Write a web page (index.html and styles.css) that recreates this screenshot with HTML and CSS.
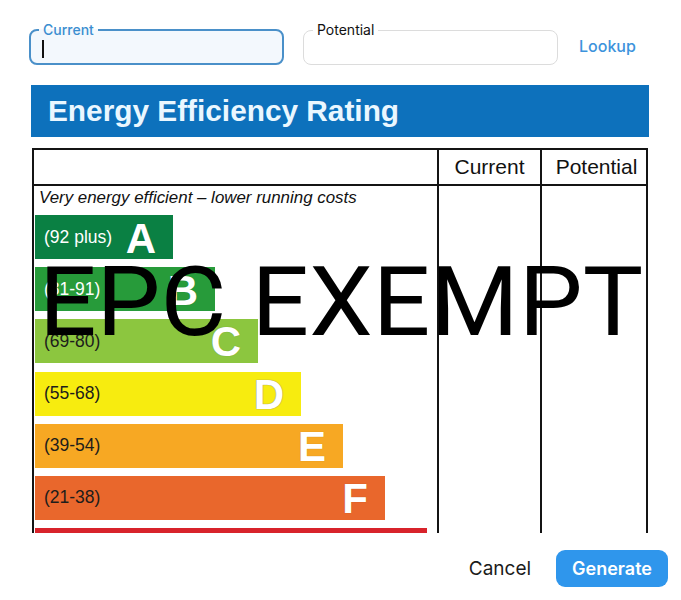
FILE: index.html
```html
<!DOCTYPE html>
<html lang="en">
<head>
<meta charset="utf-8">
<title>EPC</title>
<link rel="stylesheet" href="styles.css">
</head>
<body>
<div class="dialog">
  <div class="fields">
    <fieldset class="field field-active">
      <legend>Current</legend>
      <div class="field-input"><span class="caret"></span></div>
    </fieldset>
    <fieldset class="field field-idle">
      <legend>Potential</legend>
      <div class="field-input"></div>
    </fieldset>
    <button class="link-btn" type="button">Lookup</button>
  </div>

  <div class="epc">
    <div class="epc-title">Energy Efficiency Rating</div>
    <div class="epc-table">
      <div class="epc-head epc-col1"></div>
      <div class="epc-head epc-col2">Current</div>
      <div class="epc-head epc-col3">Potential</div>
      <div class="epc-body epc-col1">
        <div class="epc-note">Very energy efficient – lower running costs</div>
        <div class="bands">
          <div class="band band-a" style="width:138px"><span class="range">(92 plus)</span><span class="grade">A</span></div>
          <div class="band band-b" style="width:180px"><span class="range">(81-91)</span><span class="grade">B</span></div>
          <div class="band band-c" style="width:223px"><span class="range">(69-80)</span><span class="grade grade-low">C</span></div>
          <div class="band band-d" style="width:266px"><span class="range">(55-68)</span><span class="grade grade-outline">D</span></div>
          <div class="band band-e" style="width:308px"><span class="range">(39-54)</span><span class="grade">E</span></div>
          <div class="band band-f" style="width:350px"><span class="range">(21-38)</span><span class="grade">F</span></div>
          <div class="band band-g" style="width:392px"><span class="range">(1-20)</span><span class="grade">G</span></div>
        </div>
      </div>
      <div class="epc-body epc-col2"></div>
      <div class="epc-body epc-col3"></div>
    </div>
    <div class="exempt">EPC EXEMPT</div>
  </div>

  <div class="actions">
    <button class="text-btn" type="button">Cancel</button>
    <button class="primary-btn" type="button">Generate</button>
  </div>
</div>
</body>
</html>
```

FILE: styles.css
```css
* { box-sizing: border-box; }

html, body {
  margin: 0;
  padding: 0;
  background: #ffffff;
}

body {
  font-family: Inter, "Noto Sans", sans-serif;
  color: #1a1a1a;
}

.dialog {
  width: 681px;
  height: 600px;
  padding: 22px 0 0 29px;
  overflow: hidden;
}

/* ---- top fields ---- */
.fields {
  display: flex;
  align-items: center;
}

.field {
  margin: 0;
  width: 255px;
  min-width: 0;
  border-radius: 8px;
}

.field legend {
  font-size: 14px;
  line-height: 16px;
  padding: 0 4px;
}

.field-active {
  border: 2px solid #4a90c9;
  background: #f3f8fd;
  padding: 0 8px;
}

.field-active legend {
  color: #3b8ed0;
  font-weight: 500;
}

.field-active .field-input { height: 25px; }

.field-idle {
  margin-left: 19px;
  border: 1px solid #dcdcdc;
  background: #ffffff;
  padding: 0 9px;
}

.field-idle legend {
  color: #111111;
  font-weight: 400;
}

.field-idle .field-input { height: 26px; }

.field-input {
  display: flex;
  align-items: center;
}

.caret {
  display: block;
  width: 2px;
  height: 18px;
  background: #111111;
  margin: -3px 0 0 3px;
}

.link-btn {
  margin: 5px 0 0 21px;
  padding: 0;
  border: 0;
  background: none;
  font-family: Inter, "Noto Sans", sans-serif;
  font-size: 16px;
  font-weight: 500;
  color: #3d93dc;
}

/* ---- EPC chart ---- */
.epc {
  position: relative;
  margin: 20px 0 0 2px;
  width: 618px;
  height: 448px;
  overflow: hidden;
  background: #ffffff;
  font-family: "Liberation Sans", Arial, sans-serif;
}

.epc-title {
  height: 52px;
  background: #0d71bc;
  color: #eaf7ff;
  font-weight: bold;
  font-size: 29.8px;
  display: flex;
  align-items: center;
  padding-left: 17px;
}

.epc-table {
  margin: 11px 0 0 1px;
  width: 616px;
  display: grid;
  grid-template-columns: 405px 103px 104px;
  border: 2px solid #141414;
  border-bottom: 0;
}

.epc-col1,
.epc-col2 {
  border-right: 2px solid #141414;
}

.epc-head {
  height: 36px;
  border-bottom: 2px solid #141414;
  display: flex;
  align-items: center;
  justify-content: center;
  font-size: 21px;
  color: #111111;
}

.epc-col3.epc-head { padding-left: 5px; }

.epc-body { height: 420px; }

.epc-note {
  font-style: italic;
  font-size: 16.9px;
  line-height: 19px;
  padding: 2px 0 0 5px;
  color: #111111;
  white-space: nowrap;
}

.bands {
  display: flex;
  flex-direction: column;
  gap: 8.2px;
  margin: 8px 0 0 1px;
}

.band {
  height: 44px;
  display: flex;
  align-items: center;
  justify-content: space-between;
  padding: 0 17px 0 9px;
}

.range {
  font-size: 17.5px;
  color: #1d1d1b;
}

.grade {
  font-weight: bold;
  font-size: 42px;
  line-height: 1;
  color: #ffffff;
  margin-top: 3px;
  text-shadow: 0 0 1px rgba(0, 0, 0, 0.25);
}

.grade-low {
  align-self: flex-end;
  margin-top: 0;
}

.grade-outline {
  text-shadow: 0 0 1px #9a9470, 0 0 1px #9a9470;
}

.band-a { background: #0a8043; }
.band-b { background: #279b3a; }
.band-c { background: #8cc63f; }
.band-d { background: #f7ec0f; }
.band-e { background: #f7a823; }
.band-f { background: #e9672c; }
.band-g { background: #d8232b; }

.band-a .range,
.band-b .range { color: #ffffff; }

.exempt {
  position: absolute;
  left: 8px;
  top: 169.5px;
  font-family: Roboto, sans-serif;
  font-weight: 400;
  font-size: 95.6px;
  line-height: 1;
  color: #000000;
  white-space: nowrap;
  transform: scaleX(1.06);
  transform-origin: 0 0;
}

/* ---- actions ---- */
.actions {
  display: flex;
  justify-content: flex-end;
  align-items: center;
  gap: 25px;
  margin-top: 17px;
  padding-right: 13px;
}

.text-btn {
  padding: 0;
  border: 0;
  background: none;
  font-family: Inter, "Noto Sans", sans-serif;
  font-size: 19px;
  font-weight: 400;
  color: #1b1b1b;
}

.primary-btn {
  height: 37px;
  padding: 0 16px;
  border: 0;
  border-radius: 9px;
  background: #2f96ec;
  color: #ffffff;
  font-family: Inter, "Noto Sans", sans-serif;
  font-size: 18px;
  font-weight: 600;
}
```
